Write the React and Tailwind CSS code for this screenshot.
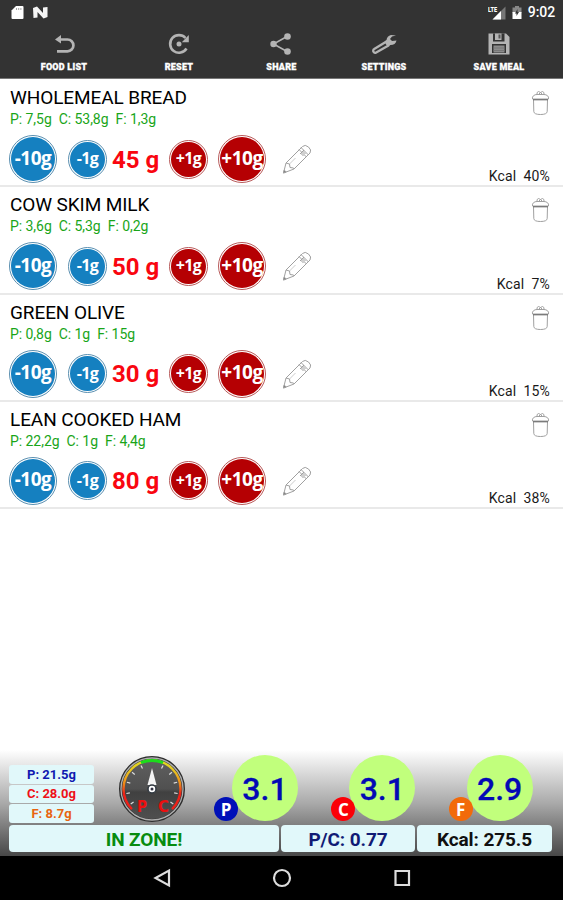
import { useState } from "react";

const initialFoods = [
  { id: 1, name: "WHOLEMEAL BREAD", macros: ["P: 7,5g", "C: 53,8g", "F: 1,3g"], grams: 45, kcal: "40%" },
  { id: 2, name: "COW SKIM MILK", macros: ["P: 3,6g", "C: 5,3g", "F: 0,2g"], grams: 50, kcal: "7%" },
  { id: 3, name: "GREEN OLIVE", macros: ["P: 0,8g", "C: 1g", "F: 15g"], grams: 30, kcal: "15%" },
  { id: 4, name: "LEAN COOKED HAM", macros: ["P: 22,2g", "C: 1g", "F: 4,4g"], grams: 80, kcal: "38%" },
];

const totals = [
  { label: "P: 21.5g", color: "text-[#1018b0]" },
  { label: "C: 28.0g", color: "text-[#ee1018]" },
  { label: "F: 8.7g", color: "text-[#e86410]" },
];

const blocks = [
  { letter: "P", value: "3.1", badge: "bg-[#0010b8]" },
  { letter: "C", value: "3.1", badge: "bg-[#fb0007]" },
  { letter: "F", value: "2.9", badge: "bg-[#f26a0a]" },
];

function StatusBar() {
  return (
    <div className="flex h-6 items-center justify-between pl-[11px] pr-2">
      <div className="flex items-center gap-[9px]">
        <svg width="13" height="15" viewBox="0 0 13 15">
          <path d="M5 1h6.5q1 0 1 1v11q0 1-1 1h-10q-1 0-1-1V5.5z" fill="#fff" />
          <path d="M5.500 3v2M7.700 3v2M9.900 3v2" stroke="#999" strokeWidth=".9" />
        </svg>
        <svg width="15" height="13" viewBox="0 0 15 13">
          <path d="M0 2 4 0.5 10 7V1.500L14.500 1v10L10.500 12.500 4.500 6v5.500L.5 12z" fill="#f5f5f5" />
        </svg>
      </div>
      <div className="flex items-center">
        <svg width="18" height="15" viewBox="0 0 18 15">
          <path d="M17.500 1.500v13h-13z" fill="#777" />
          <path d="M13 6v8.500H4.500z" fill="#fff" />
          <text x="0" y="6.500" fontSize="7" fontWeight="900" fontFamily="Roboto, sans-serif" fill="#fff" textLength="9" lengthAdjust="spacingAndGlyphs">LTE</text>
        </svg>
        <svg className="ml-[6px]" width="10" height="15" viewBox="0 0 10 15">
          <path d="M3 1h4v1.500h2.500V8H.5V2.500H3z" fill="#888" />
          <path d="M.5 7h9v7h-9z" fill="#fff" />
          <path d="m5.500 4-2.500 4.500h1.500v2.500L7 7H5.500z" fill="#333" />
        </svg>
        <span className="ml-[6px] text-[14px] font-medium leading-none tracking-[-0.1px] text-white">9:02</span>
      </div>
    </div>
  );
}

function FoodListIcon() {
  return (
    <svg width="24" height="24" viewBox="0 0 24 24" fill="none" stroke="#b4b4b4" strokeWidth="2.700">
      <path d="M5 7.500h10.500a5.700 5.700 0 0 1 0 11.800H5" />
      <path d="m9 3-6 4.500 6 4z" fill="#b4b4b4" stroke="none" />
    </svg>
  );
}

function ResetIcon() {
  return (
    <svg width="24" height="24" viewBox="0 0 24 24" fill="none">
      <path d="M19.500 16.500A8.800 8.800 0 1 1 18.500 6" stroke="#b4b4b4" strokeWidth="2.600" />
      <path d="M21.800 3v7.200h-7z" fill="#b4b4b4" />
      <circle cx="12" cy="12" r="2.500" fill="#b4b4b4" />
    </svg>
  );
}

function ShareIcon() {
  return (
    <svg width="24" height="24" viewBox="0 0 24 24" fill="#b4b4b4">
      <path d="M17 4.500 3.500 12 17 19.500" fill="none" stroke="#b4b4b4" strokeWidth="1.600" />
      <circle cx="3.500" cy="12" r="3.200" />
      <circle cx="17.500" cy="4.500" r="3.300" />
      <circle cx="17.500" cy="19.500" r="3.300" />
    </svg>
  );
}

function SettingsIcon() {
  return (
    <svg width="26" height="24" viewBox="0 0 26 24" fill="none" stroke="#b4b4b4">
      <path d="M15.500 9.500 3.200 17a2 2 0 0 0 2 3.500L17.500 13.500z" strokeWidth="2.300" strokeLinejoin="round" />
      <path d="M25 3.500 20 3q-4 1-4.500 5l-2 2 3 4.500 3-1.500q5 0 6-4.500l-4.500.5-2-2 2-2.500z" fill="#b4b4b4" stroke="none" />
    </svg>
  );
}

function SaveIcon() {
  return (
    <svg width="24" height="24" viewBox="0 0 24 24">
      <path d="M1.500 1.500H19l3.500 3.500v17.500h-21z" fill="#b4b4b4" />
      <path d="M6 1.500h11.500v8H6z" fill="#333" />
      <path d="M8 1.500h6.500V8H8z" fill="#b4b4b4" />
      <path d="M11.500 2.500h2v4h-2z" fill="#555" />
      <path d="M5 12h14v9H5z" fill="#333" />
      <path d="M6.500 13.500h11v7h-11z" fill="#8c8c8c" />
      <path d="M6.500 16h11M6.500 18.500h11" stroke="#777" />
    </svg>
  );
}

function Toolbar() {
  const items = [
    { label: "FOOD LIST", Icon: FoodListIcon },
    { label: "RESET", Icon: ResetIcon },
    { label: "SHARE", Icon: ShareIcon },
    { label: "SETTINGS", Icon: SettingsIcon },
    { label: "SAVE MEAL", Icon: SaveIcon },
  ];

  return (
    <nav className="grid grid-cols-[128px_102px_103px_102px_128px]">
      {items.map(({ label, Icon }) => (
        <button key={label} className="flex flex-col items-center pt-2">
          <Icon />
          <span className="mt-[5px] whitespace-nowrap text-[9px] font-black leading-[13px] tracking-[0.25px] text-white [-webkit-text-stroke:0.3px_white]">
            {label}
          </span>
        </button>
      ))}
    </nav>
  );
}

function BigStep({ label, red, onClick }) {
  return (
    <button
      onClick={onClick}
      className={`flex size-12 shrink-0 items-center justify-center rounded-full border ${red ? "border-[#b85a5a]" : "border-[#5a8fb0]"}`}
    >
      <span
        className={`flex size-11 items-center justify-center whitespace-nowrap rounded-full pb-[2px] font-['Open_Sans',sans-serif] text-[19px] font-bold leading-none tracking-[-0.5px] text-white ${red ? "bg-[#b50003]" : "bg-[#1580c0]"}`}
      >
        {label}
      </span>
    </button>
  );
}

function SmallStep({ label, red, onClick }) {
  return (
    <button
      onClick={onClick}
      className={`flex size-[39px] shrink-0 items-center justify-center rounded-full border ${red ? "border-[#b85a5a]" : "border-[#5a8fb0]"}`}
    >
      <span
        className={`flex size-[35px] items-center justify-center whitespace-nowrap rounded-full pb-[2px] font-['Open_Sans',sans-serif] text-[16px] font-bold leading-none tracking-[-0.6px] text-white ${red ? "bg-[#b50003]" : "bg-[#1580c0]"}`}
      >
        {label}
      </span>
    </button>
  );
}

function PencilIcon() {
  return (
    <svg width="30" height="32" viewBox="0 0 30 32" fill="none" stroke="#a0a0a0" strokeWidth="1" strokeLinejoin="round">
      <path d="M1.500 30 4 20 20.500 3.500Q23 1 26.500 4t1.500 6L12 26z" />
      <path d="m4 20 3.500 1 .500 3.500 3.500.500.500 1M17 6.500l7.500 7.500M19 4.500l7.500 7.500M18.500 10l3 3M20.500 8l3 3M18 11l4-4" />
      <path d="M7.500 21l6-6" stroke="#ccc" />
      <path d="m1.500 30 .700-3 2 2z" fill="#777" />
    </svg>
  );
}

function TrashIcon() {
  return (
    <svg width="19" height="26" viewBox="0 0 19 26" fill="none" stroke="#a0a0a0" strokeWidth="1" strokeLinejoin="round">
      <path d="M6 4.500q-.5-2.500 1.500-3l2 1 2-1q2 .5 1.500 3M7.500 4.500l2-2 2 2M1.500 9q-.5-2 1-3.300T6 4.500h7q2 0 3.500 1.200t1 3.300z" />
      <path d="M2.500 9.500 2.800 21.500q.2 3 6.700 3t6.700-3l.3-12" />
      <path d="M2 9.700h15" stroke="#777" strokeWidth="1.300" />
    </svg>
  );
}

function FoodRow({ food, onChange }) {
  return (
    <li className="flex h-[107.3px] justify-between border-b-2 border-[#e9e9e9] pl-[9px] pr-[13px]">
      <div>
        <h2 className="mt-[7px] pl-px text-[19px] leading-[22px] tracking-[-0.1px] text-black">{food.name}</h2>
        <p className="mt-[2px] flex gap-[7px] pl-px text-[14px] leading-4 tracking-[-0.05px] text-[#19a519]">
          {food.macros.map((macro) => (
            <span key={macro}>{macro}</span>
          ))}
        </p>
        <div className="mt-[8px] flex h-12 items-center">
          <BigStep label="-10g" onClick={() => onChange(food.id, -10)} />
          <div className="ml-[11px] flex">
            <SmallStep label="-1g" onClick={() => onChange(food.id, -1)} />
          </div>
          <span className="w-[62px] whitespace-nowrap pr-[5px] pt-px text-center text-[24px] font-bold leading-none text-[#f90610]">
            {food.grams} g
          </span>
          <SmallStep label="+1g" red onClick={() => onChange(food.id, 1)} />
          <div className="ml-[10px] flex">
            <BigStep label="+10g" red onClick={() => onChange(food.id, 10)} />
          </div>
          <button className="ml-4">
            <PencilIcon />
          </button>
        </div>
      </div>
      <div className="flex flex-col items-end justify-between pb-px pt-[10px]">
        <button>
          <TrashIcon />
        </button>
        <span className="whitespace-pre text-[14px] leading-4 tracking-[0.15px] text-[#1a1a1a]">Kcal  {food.kcal}</span>
      </div>
    </li>
  );
}

function Gauge() {
  const ticks = [-125, -100, -75, -50, -25, 25, 50, 75, 100, 125];

  return (
    <svg width="68" height="68" viewBox="0 0 68 68">
      <defs>
        <linearGradient id="dial" x1="0" y1="0" x2="0" y2="1">
          <stop offset="0" stopColor="#606060" />
          <stop offset=".5" stopColor="#505050" />
          <stop offset=".55" stopColor="#404040" />
          <stop offset="1" stopColor="#505050" />
        </linearGradient>
        <linearGradient id="arc" gradientUnits="userSpaceOnUse" x1="0" y1="5" x2="0" y2="52">
          <stop offset="0" stopColor="#e0e020" />
          <stop offset=".25" stopColor="#e8c020" />
          <stop offset=".5" stopColor="#ee8a18" />
          <stop offset=".72" stopColor="#ee2018" />
        </linearGradient>
      </defs>
      <circle cx="34" cy="34" r="31.500" fill="url(#dial)" stroke="#2d2d2d" strokeWidth="3" />
      <circle cx="34" cy="34" r="31" fill="none" stroke="#b0b0b0" strokeWidth="1.300" />
      <path d="M13.900 54.100A28.500 28.500 0 1 1 54.100 54.100" fill="none" stroke="url(#arc)" strokeWidth="2.400" />
      <path d="M23 7.700a28.500 28.500 0 0 1 22 0" fill="none" stroke="#1bdc1b" strokeWidth="3" />
      {ticks.map((angle) => (
        <path key={angle} d="M34 8v3.500" stroke="#ddd" strokeWidth="1.200" transform={`rotate(${angle} 34 34)`} />
      ))}
      <text x="19" y="57" fontSize="15" fontWeight="700" fontFamily="DejaVu Sans, sans-serif" fill="#ec1010" textLength="10" lengthAdjust="spacingAndGlyphs">P</text>
      <text x="40" y="57" fontSize="15" fontWeight="700" fontFamily="DejaVu Sans, sans-serif" fill="#ec1010" textLength="11" lengthAdjust="spacingAndGlyphs">C</text>
      <path d="m34 13 4.500 17h-9z" fill="#f4f4f4" />
      <circle cx="34" cy="34" r="4" fill="#fff" stroke="#303840" strokeWidth="1.500" />
      <circle cx="34" cy="34" r="1.500" fill="#334" />
    </svg>
  );
}

function Block({ letter, value, badge }) {
  return (
    <div className="relative flex size-[66px] items-center justify-center rounded-full bg-[#c1ff7c] pt-[2px] text-[32px] font-medium leading-none text-[#0309b5] [-webkit-text-stroke:0.3px_#0309b5]">
      {value}
      <span
        className={`absolute bottom-0 left-[-18px] flex size-6 items-center justify-center rounded-full font-['Open_Sans',sans-serif] text-[17px] font-bold leading-none text-white [-webkit-text-stroke:0] ${badge}`}
      >
        {letter}
      </span>
    </div>
  );
}

function Summary() {
  return (
    <footer className="h-[106px] bg-linear-to-b from-white via-[#aaa] to-[#484848] pt-[5px]">
      <div className="flex h-[68px] pl-[9px]">
        <div className="mt-[10px] flex w-[85px] flex-col gap-px">
          {totals.map((total) => (
            <div
              key={total.label}
              className={`flex h-[18.5px] shrink-0 items-center justify-center rounded-[3px] bg-[#e1f8fa] text-[13px] font-bold leading-none ${total.color}`}
            >
              {total.label}
            </div>
          ))}
        </div>
        <div className="ml-6">
          <Gauge />
        </div>
        <div className="ml-[46px] flex gap-[51.3px]">
          {blocks.map((block) => (
            <Block key={block.letter} {...block} />
          ))}
        </div>
      </div>
      <div className="mt-[2px] grid h-[27px] grid-cols-[270px_134px_135px] gap-[2px] pl-[9px] pr-3 text-[19px] font-bold leading-none tracking-[-0.1px]">
        <div className="flex items-center justify-center rounded-[4px] bg-[#e1f8fa] pt-px text-[#078c10]">IN ZONE!</div>
        <div className="flex items-center justify-center rounded-[4px] bg-[#e1f8fa] pt-px text-[#101b75]">P/C: 0.77</div>
        <div className="flex items-center justify-center rounded-[4px] bg-[#e1f8fa] pt-px text-[#101010]">Kcal: 275.5</div>
      </div>
    </footer>
  );
}

function NavBar() {
  return (
    <div className="flex h-11 items-center justify-center bg-black">
      <svg width="260" height="24" viewBox="0 0 260 24" fill="none" stroke="#ddd" strokeWidth="2.200">
        <path d="M17 4.500v15L3.500 12z" />
        <circle cx="130" cy="12" r="8" />
        <path d="M243.500 5h13.500v14h-13.500z" />
      </svg>
    </div>
  );
}

export default function App() {
  const [foods, setFoods] = useState(initialFoods);

  function handleChange(id, delta) {
    setFoods((prev) =>
      prev.map((food) => (food.id === id ? { ...food, grams: Math.max(0, food.grams + delta) } : food)),
    );
  }

  return (
    <div className="flex h-[900px] w-[563px] flex-col overflow-hidden bg-white font-[Roboto,sans-serif]">
      <header className="h-[79px] shrink-0 border-b border-[#777] bg-[#333]">
        <StatusBar />
        <Toolbar />
      </header>
      <ul className="flex-1 pt-px">
        {foods.map((food) => (
          <FoodRow key={food.id} food={food} onChange={handleChange} />
        ))}
      </ul>
      <Summary />
      <NavBar />
    </div>
  );
}
